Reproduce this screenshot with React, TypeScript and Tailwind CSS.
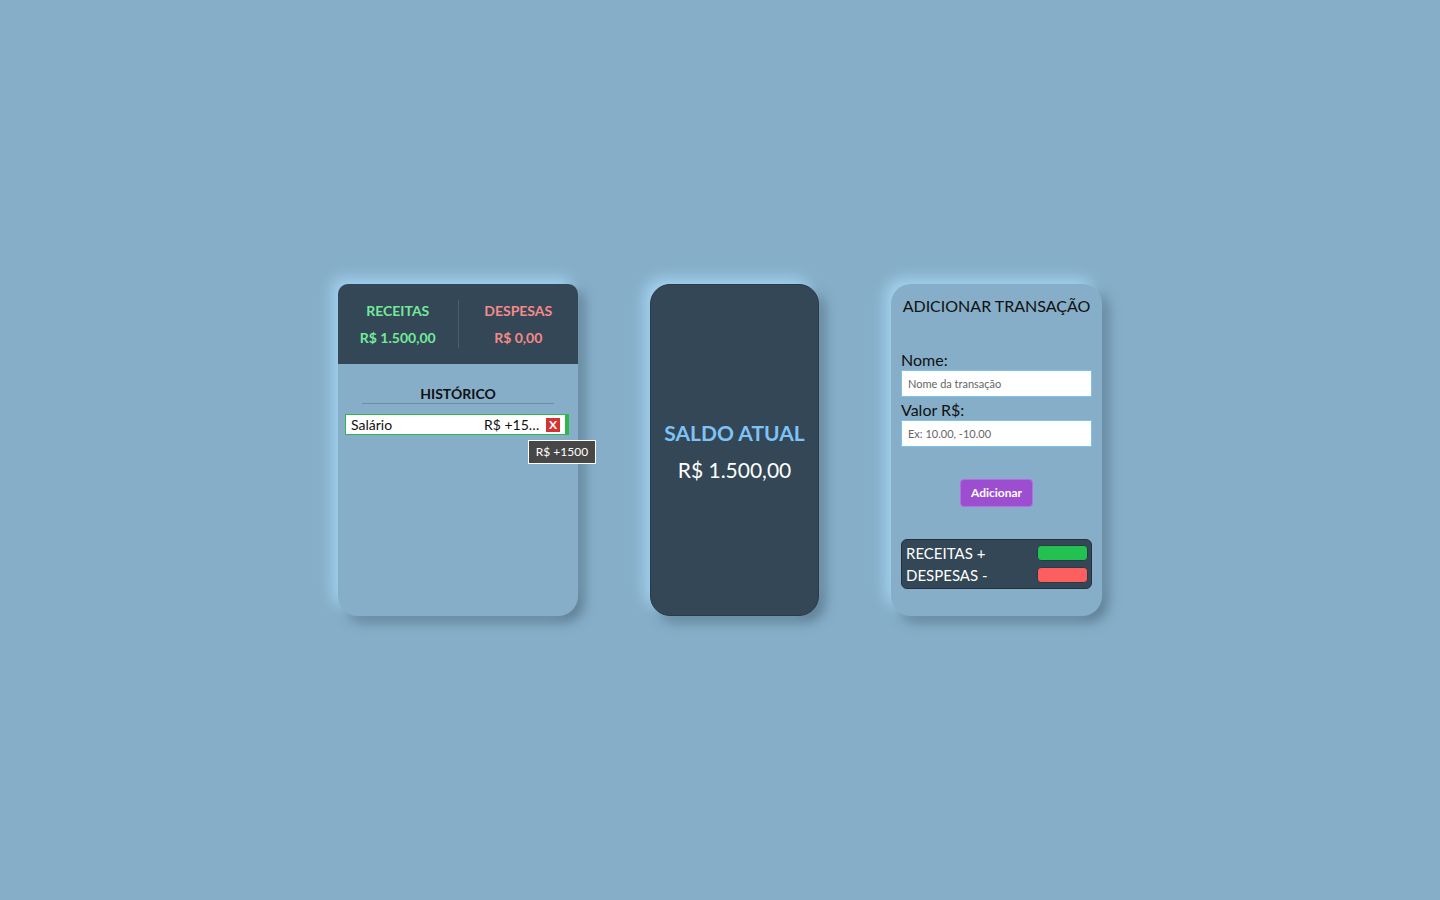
import React from "react";

const font = "font-['Lato','Open_Sans',sans-serif]";
const card =
  "shadow-[-6px_-6px_14px_#a3d2f0,6px_6px_12px_#5e7e93]";

function Historico() {
  return (
    <div className={`relative flex h-[332px] w-[240px] flex-col rounded-t-[10px] rounded-b-[20px] bg-[#86aec8] ${card}`}>
      <div className="flex h-[80px] items-center rounded-t-[10px] bg-[#334756] py-4">
        <div className="flex flex-1 flex-col items-center gap-[6px]">
          <span className="text-[14px] font-bold text-[#74e99c]">RECEITAS</span>
          <span className="text-[14px] font-bold text-[#74e99c]">R$ 1.500,00</span>
        </div>
        <div className="h-[48px] w-px bg-[#4a5f6e]" />
        <div className="flex flex-1 flex-col items-center gap-[6px]">
          <span className="text-[14px] font-bold text-[#f58a8a]">DESPESAS</span>
          <span className="text-[14px] font-bold text-[#f58a8a]">R$ 0,00</span>
        </div>
      </div>

      <div className="mx-6 mt-[21px] border-b border-[#6d8fa4] pb-[1px] text-center text-[14px] font-bold leading-[17px] text-[#111]">
        HISTÓRICO
      </div>

      <div className="ml-[7px] mt-[10px] flex h-[21px] w-[224px] items-center border border-r-4 border-[#2fb84a] bg-white pl-[5px] pr-[5px]">
        <span className="flex-1 text-[14px] text-[#111]">Salário</span>
        <span className="w-[56px] truncate text-[14px] text-[#111]">R$ +1500</span>
        <span className="ml-[6px] flex h-[14px] w-[14px] items-center justify-center bg-[#d43333] text-[12px] font-bold leading-none text-white">
          X
        </span>
      </div>

      <div className="absolute left-[190px] top-[156px] flex h-[24px] w-[68px] items-center justify-center border border-white bg-[#474747] text-[12px] text-white">
        R$ +1500
      </div>
    </div>
  );
}

function Saldo() {
  return (
    <div className={`flex h-[332px] w-[169px] flex-col items-center justify-center gap-[8px] rounded-[20px] border border-[#2a3a46] bg-[#334756] ${card}`}>
      <span className="mt-[2px] text-[21px] font-bold leading-[29px] text-[#7ec2f6]">SALDO ATUAL</span>
      <span className="text-[21px] leading-[29px] text-white">R$ 1.500,00</span>
    </div>
  );
}

function Adicionar() {
  return (
    <div className={`flex h-[332px] w-[211px] flex-col rounded-[20px] bg-[#86aec8] px-[10px] ${card}`}>
      <h2 className="-mx-2 mt-[10px] whitespace-nowrap text-center text-[16px] text-[#111]">ADICIONAR TRANSAÇÃO</h2>

      <label className="mt-[32px] text-[16px] leading-[20px] text-[#111]">Nome:</label>
      <input
        className="h-[27px] w-full border-[1.5px] border-[#7cc3ec] bg-white px-[6px] text-[11px] text-[#333] placeholder:text-[#666] outline-none"
        placeholder="Nome da transação"
        type="text"
      />
      <label className="mt-[3px] text-[16px] leading-[20px] text-[#111]">Valor R$:</label>
      <input
        className="h-[27px] w-full border-[1.5px] border-[#7cc3ec] bg-white px-[6px] text-[11px] text-[#333] placeholder:text-[#666] outline-none"
        placeholder="Ex: 10.00, -10.00"
        type="text"
      />

      <button
        className="mx-auto mt-[32px] h-[28px] w-[73px] rounded-[4px] border border-[#b46ee0] bg-[#9c4dd0] text-[12px] font-bold text-white"
        type="button"
      >
        Adicionar
      </button>

      <div className="mt-[32px] flex flex-col gap-[6px] rounded-[6px] border border-[#24323d] bg-[#334756] py-[5px] pl-[4px] pr-[3px]">
        <div className="flex h-[16px] items-center justify-between">
          <span className="text-[15px] text-white">RECEITAS +</span>
          <span className="h-[16px] w-[51px] rounded-[4px] border border-[#2a3a46] bg-[#22c152]" />
        </div>
        <div className="flex h-[16px] items-center justify-between">
          <span className="text-[15px] text-white">DESPESAS -</span>
          <span className="h-[16px] w-[51px] rounded-[4px] border border-[#2a3a46] bg-[#fd5f5f]" />
        </div>
      </div>
    </div>
  );
}

export default function App() {
  return (
    <div className={`flex h-[900px] w-full items-center justify-center gap-[72px] bg-[#86aec8] ${font}`}>
      <Historico />
      <Saldo />
      <Adicionar />
    </div>
  );
}
